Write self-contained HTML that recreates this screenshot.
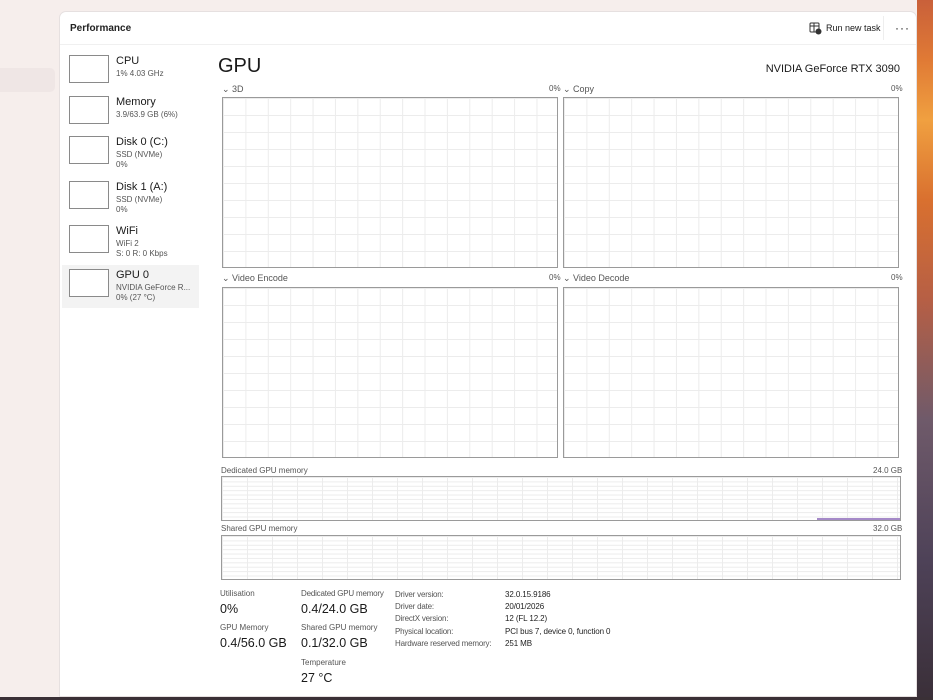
<!DOCTYPE html>
<html><head><style>
*{margin:0;padding:0;box-sizing:border-box}
body{width:933px;height:700px;overflow:hidden;background:#f6eeec;font-family:"Liberation Sans",sans-serif;color:#1a1a1a;position:relative}
.wall{position:absolute;left:917px;top:0;width:16px;height:700px;background:linear-gradient(#c9603a 0,#e07a35 60px,#f0a040 120px,#d9702f 200px,#b65f45 300px,#6f5a6a 420px,#4e4258 560px,#3a2f38 700px)}
.bot{position:absolute;left:0;top:697px;width:933px;height:3px;background:#3a3036}
.selL{position:absolute;left:0;top:68px;width:55px;height:24px;background:#efe6e5;border-radius:0 5px 5px 0}
.win{position:absolute;left:59px;top:11px;width:858px;height:686px;background:#fff;border-radius:7px 7px 0 0;border:1px solid #e6e0e0}
.hdr{position:absolute;left:0;top:0;width:100%;height:33px;border-bottom:1px solid #f0f0f0}
.t{position:absolute;white-space:nowrap}
.side .item{position:absolute;left:0;width:140px;height:44px}
.thumb{position:absolute;left:9px;top:0;width:40px;height:28px;border:1px solid #8a8a8a;background:#fff}
.g{position:absolute;border:1px solid #9a9a9a;background-color:#fff;
background-image:linear-gradient(#ececec 1px,transparent 1px),linear-gradient(90deg,#ececec 1px,transparent 1px)}
.big{background-size:22.4px 17px}
.mem{background-size:25px 4.4px}
.lbl{font-size:9px;color:#555}
.sm{font-size:8px;color:#555}
</style></head><body>
<div class="selL"></div>
<div class="wall"></div>
<div class="bot"></div>
<div class="win">
 <div class="hdr">
  <div class="t" style="left:10px;top:11px;font-size:10px;font-weight:bold;color:#222">Performance</div>
  <svg class="t" style="left:749px;top:10px" width="13" height="13" viewBox="0 0 13 13"><rect x="1" y="1" width="9" height="9" rx="1" fill="none" stroke="#333"/><line x1="1" y1="4" x2="10" y2="4" stroke="#333"/><line x1="5" y1="1" x2="5" y2="10" stroke="#333"/><circle cx="9.5" cy="9.5" r="3" fill="#333"/></svg>
  <div class="t" style="left:766px;top:11px;font-size:9px">Run new task</div>
  <div class="t" style="left:823px;top:4px;width:1px;height:24px;background:#eee"></div>
  <div class="t" style="left:835px;top:9px;font-size:12px;letter-spacing:1px">···</div>
 </div>
 <div class="side">
  <div class="item" style="top:43px"><div class="thumb"></div><div class="t" style="left:56px;top:0;font-size:11px">CPU</div><div class="t sm" style="left:56px;top:14px">1% 4.03 GHz</div></div>
  <div class="item" style="top:84px"><div class="thumb"></div><div class="t" style="left:56px;top:0;font-size:11px">Memory</div><div class="t sm" style="left:56px;top:14px">3.9/63.9 GB (6%)</div></div>
  <div class="item" style="top:124px"><div class="thumb"></div><div class="t" style="left:56px;top:0;font-size:11px">Disk 0 (C:)</div><div class="t sm" style="left:56px;top:14px">SSD (NVMe)</div><div class="t sm" style="left:56px;top:24px">0%</div></div>
  <div class="item" style="top:169px"><div class="thumb"></div><div class="t" style="left:56px;top:0;font-size:11px">Disk 1 (A:)</div><div class="t sm" style="left:56px;top:14px">SSD (NVMe)</div><div class="t sm" style="left:56px;top:24px">0%</div></div>
  <div class="item" style="top:213px"><div class="thumb"></div><div class="t" style="left:56px;top:0;font-size:11px">WiFi</div><div class="t sm" style="left:56px;top:14px">WiFi 2</div><div class="t sm" style="left:56px;top:24px">S: 0 R: 0 Kbps</div></div>
  <div style="position:absolute;left:2px;top:253px;width:137px;height:43px;background:#f3f3f3"></div>
  <div class="item" style="top:257px"><div class="thumb"></div><div class="t" style="left:56px;top:0;font-size:11px">GPU 0</div><div class="t sm" style="left:56px;top:14px">NVIDIA GeForce R...</div><div class="t sm" style="left:56px;top:24px">0% (27 °C)</div></div>
 </div>
 <div class="t" style="left:158px;top:43px;font-size:20px">GPU</div>
 <div class="t" style="right:16px;top:51px;font-size:11px">NVIDIA GeForce RTX 3090</div>
 <div class="t lbl" style="left:162px;top:72px">⌄ 3D</div><div class="t sm" style="left:489px;top:72px">0%</div>
 <div class="t lbl" style="left:503px;top:72px">⌄ Copy</div><div class="t sm" style="left:831px;top:72px">0%</div>
 <div class="g big" style="left:162px;top:85px;width:336px;height:171px"></div>
 <div class="g big" style="left:503px;top:85px;width:336px;height:171px"></div>
 <div class="t lbl" style="left:162px;top:261px">⌄ Video Encode</div><div class="t sm" style="left:489px;top:261px">0%</div>
 <div class="t lbl" style="left:503px;top:261px">⌄ Video Decode</div><div class="t sm" style="left:831px;top:261px">0%</div>
 <div class="g big" style="left:162px;top:275px;width:336px;height:171px"></div>
 <div class="g big" style="left:503px;top:275px;width:336px;height:171px"></div>
 <div class="t sm" style="left:161px;top:454px">Dedicated GPU memory</div><div class="t sm" style="left:813px;top:454px">24.0 GB</div>
 <div class="g mem" style="left:161px;top:464px;width:680px;height:45px"></div>
 <div class="t" style="left:757px;top:506px;width:83px;height:2px;background:#a58ac8"></div>
 <div class="t sm" style="left:161px;top:512px">Shared GPU memory</div><div class="t sm" style="left:813px;top:512px">32.0 GB</div>
 <div class="g mem" style="left:161px;top:523px;width:680px;height:45px"></div>
 <div class="t lbl" style="left:160px;top:577px;font-size:8px">Utilisation</div>
 <div class="t" style="left:160px;top:590px;font-size:12.5px">0%</div>
 <div class="t lbl" style="left:160px;top:611px;font-size:8px">GPU Memory</div>
 <div class="t" style="left:160px;top:624px;font-size:12.5px">0.4/56.0 GB</div>
 <div class="t lbl" style="left:241px;top:577px;font-size:8px;letter-spacing:-0.2px">Dedicated GPU memory</div>
 <div class="t" style="left:241px;top:590px;font-size:12.5px">0.4/24.0 GB</div>
 <div class="t lbl" style="left:241px;top:611px;font-size:8px">Shared GPU memory</div>
 <div class="t" style="left:241px;top:624px;font-size:12.5px">0.1/32.0 GB</div>
 <div class="t lbl" style="left:241px;top:646px;font-size:8px">Temperature</div>
 <div class="t" style="left:241px;top:659px;font-size:12.5px">27 °C</div>
 <div class="t sm" style="left:335px;top:577px;line-height:12.2px;letter-spacing:-0.2px">Driver version:<br>Driver date:<br>DirectX version:<br>Physical location:<br>Hardware reserved memory:</div>
 <div class="t" style="left:445px;top:577px;font-size:8px;line-height:12.2px;color:#222;letter-spacing:-0.1px">32.0.15.9186<br>20/01/2026<br>12 (FL 12.2)<br>PCI bus 7, device 0, function 0<br>251 MB</div>
</div>
</body></html>
